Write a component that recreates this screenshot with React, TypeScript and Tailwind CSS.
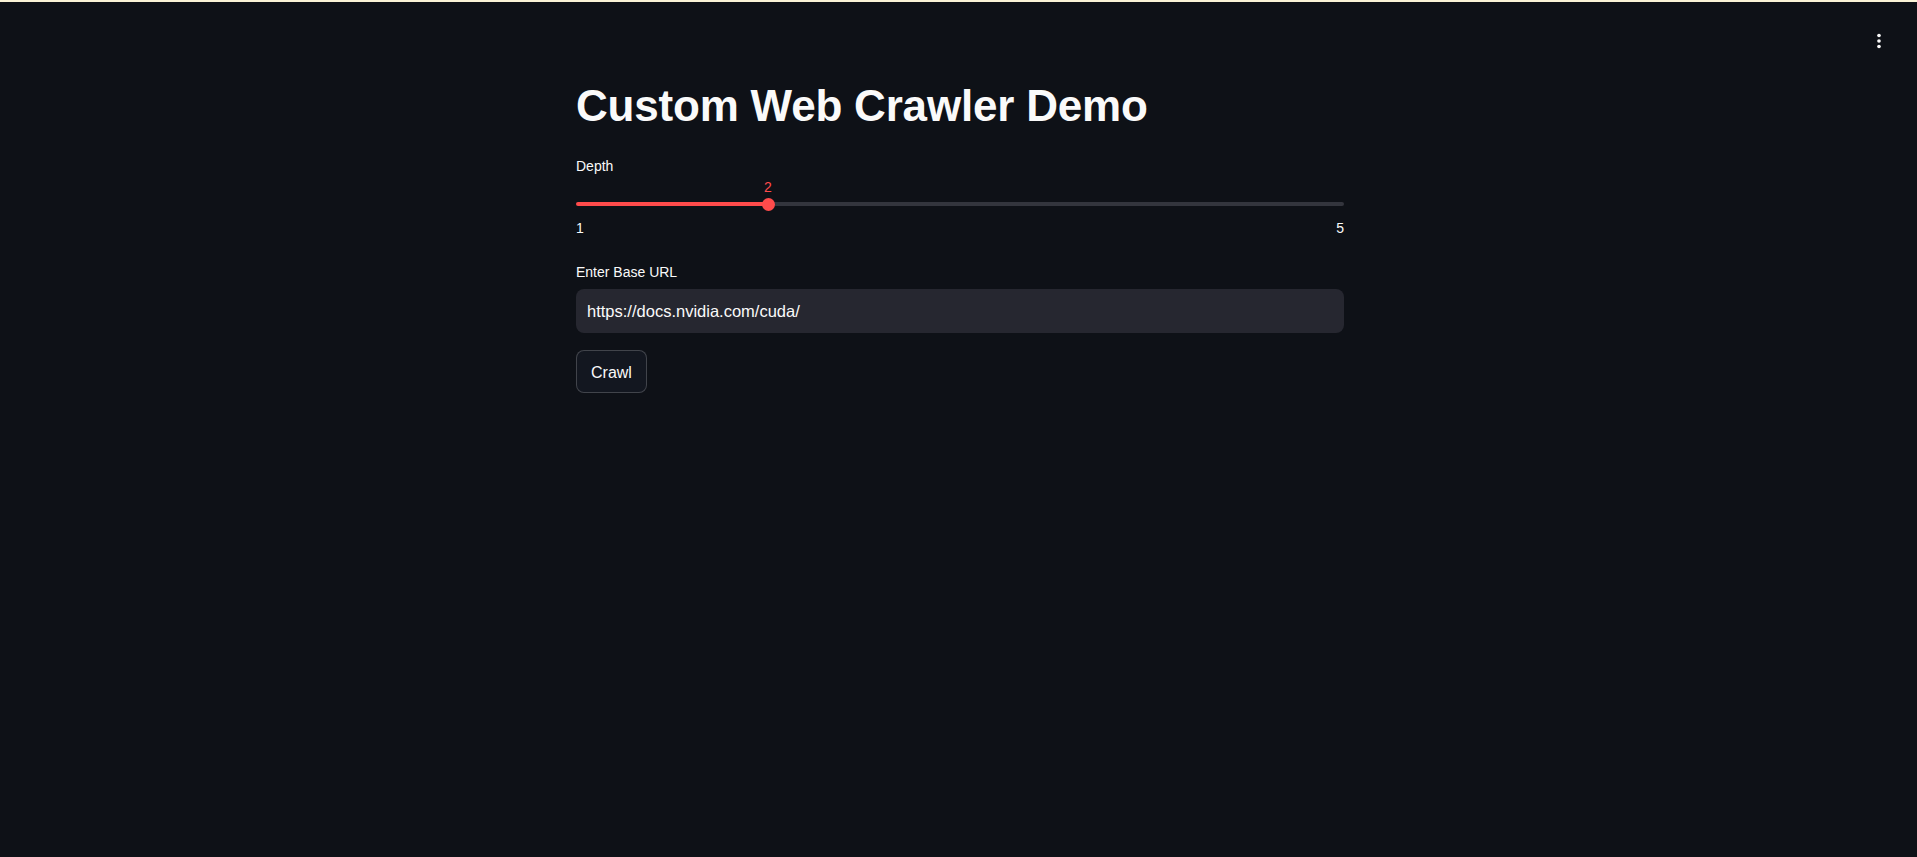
const App = () => {
  const min = 1;
  const max = 5;
  const value = 2;
  const pct = ((value - min) / (max - min)) * 100;

  return (
    <div className="relative min-h-[857px] w-full bg-[#0e1117] text-[#fafafa] font-['Liberation_Sans',Arial,sans-serif]">
      <div className="h-[2px] w-full bg-[#faf3d7]" />

      {/* toolbar menu */}
      <header className="absolute right-[27px] top-[30px]">
        <svg width="22" height="22" viewBox="0 0 24 24" fill="#fafafa">
          <circle cx="12" cy="6" r="2" />
          <circle cx="12" cy="12" r="2" />
          <circle cx="12" cy="18" r="2" />
        </svg>
      </header>

      <div className="flex justify-center pl-[3px]">
        <main className="flex w-[768px] flex-col pt-[78px]">
          <h1 className="text-[44px] font-bold leading-[1.2] tracking-[-0.2px]">Custom Web Crawler Demo</h1>

          {/* slider */}
          <label className="mt-[23px] text-sm leading-[21px]">Depth</label>
          <div className="flex flex-col">
            <div className="flex text-sm leading-[21px] text-[#ff4b4b]">
              <div style={{ width: `${pct}%` }} />
              <span className="-translate-x-1/2">{value}</span>
            </div>
            <div className="flex h-[13px] items-center">
              <div className="h-[4px] rounded-l-full bg-[#ff4b4b]" style={{ width: `${pct}%` }} />
              <div className="-mx-[6.5px] z-10 h-[13px] w-[13px] shrink-0 rounded-full bg-[#ff4b4b]" />
              <div className="h-[4px] flex-1 rounded-r-full bg-[#33353d]" />
            </div>
            <div className="mt-[7px] flex justify-between text-sm leading-[21px]">
              <span>{min}</span>
              <span>{max}</span>
            </div>
          </div>

          {/* url input */}
          <label className="mt-[23px] text-sm leading-[21px]">Enter Base URL</label>
          <div className="mt-[6px] flex h-[44px] items-center rounded-lg bg-[#262730] px-[11px]">
            <input
              className="w-full bg-transparent text-[16.5px] leading-[24px] text-[#fafafa] outline-none"
              defaultValue="https://docs.nvidia.com/cuda/"
            />
          </div>

          <div className="mt-[17px] flex">
            <button className="flex h-[43px] items-center rounded-lg border border-[#fafafa]/20 bg-[#131720] px-[14px] pt-[3px] text-base">
              Crawl
            </button>
          </div>
        </main>
      </div>
    </div>
  );
};

export default App;
